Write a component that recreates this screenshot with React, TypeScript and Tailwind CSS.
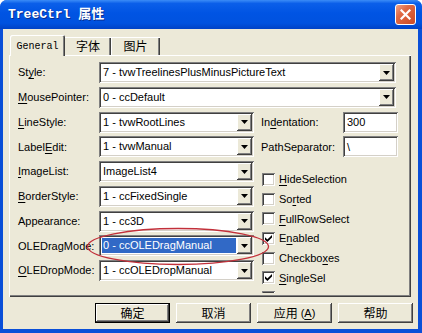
import React from "react";

const raised =
  "shadow-[inset_-1px_-1px_0_#404040,inset_1px_1px_0_#ffffff,inset_-2px_-2px_0_#808080,inset_2px_2px_0_#ece9d8]";
const sunken =
  "shadow-[inset_1px_1px_0_#808080,inset_-1px_-1px_0_#ffffff,inset_2px_2px_0_#404040,inset_-2px_-2px_0_#d4d0c8]";

function Arrow() {
  return (
    <div className={`w-[15px] h-full bg-[#ece9d8] flex items-center justify-center ${raised}`}>
      <svg width="7" height="4" viewBox="0 0 7 4">
        <path d="M0 0H7L3.5 4Z" fill="#000" />
      </svg>
    </div>
  );
}

function Combo({ text, long, selected }: { text: string; long?: boolean; selected?: boolean }) {
  return (
    <div
      className={`h-[21px] ${long ? "w-[297px]" : "w-[155px]"} bg-white flex p-[2px] ${sunken}`}
    >
      <div className="flex-1 flex items-center pl-[1px] pr-[1px] min-w-0">
        <span
          className={`whitespace-nowrap leading-[15px] h-[15px] pl-[1px] ${
            selected ? "bg-[#3169c6] text-white w-full" : "text-black"
          }`}
        >
          {text}
        </span>
      </div>
      <Arrow />
    </div>
  );
}

function Label({ children, w }: { children: React.ReactNode; w: string }) {
  return <div className={`${w} whitespace-nowrap text-black`}>{children}</div>;
}

function U({ children }: { children: React.ReactNode }) {
  return <span className="underline underline-offset-[2px]">{children}</span>;
}

function Row({ label, text, long, selected }: { label: React.ReactNode; text: string; long?: boolean; selected?: boolean }) {
  return (
    <div className="flex items-center h-[21px]">
      <Label w="w-[81px]">{label}</Label>
      <Combo text={text} long={long} selected={selected} />
    </div>
  );
}

function TextBox({ label, value }: { label: React.ReactNode; value: string }) {
  return (
    <div className="flex items-center h-[21px]">
      <Label w="w-[82px]">{label}</Label>
      <div className={`w-[55px] h-[21px] bg-white flex items-center pl-[4px] ${sunken}`}>{value}</div>
    </div>
  );
}

function Check({ label, checked }: { label: React.ReactNode; checked?: boolean }) {
  return (
    <div className="flex items-center h-[13px] shrink-0 ml-[1px]">
      <div className={`w-[13px] h-[13px] bg-white relative shrink-0 ${sunken}`}>
        {checked && (
          <svg className="absolute left-[3px] top-[3px]" width="7" height="7" viewBox="0 0 7 7">
            <path d="M0 2.2L2.4 4.6L7 0V2.6L2.4 7L0 4.8Z" fill="#000" />
          </svg>
        )}
      </div>
      <span className="ml-[4px] whitespace-nowrap">{label}</span>
    </div>
  );
}

function Btn({ children, def }: { children: React.ReactNode; def?: boolean }) {
  return (
    <div
      className={`w-[75px] h-[20px] flex items-center justify-center bg-[#ece9d8] text-[12px] font-['Noto_Sans_CJK_SC',sans-serif] ${
        def
          ? "shadow-[inset_0_0_0_1px_#000000,inset_-2px_-2px_0_#404040,inset_2px_2px_0_#ffffff,inset_-3px_-3px_0_#808080]"
          : raised
      }`}
    >
      {children}
    </div>
  );
}

export default function App() {
  return (
    <div className="relative w-[422px] h-[333px] flex flex-col bg-[#0a4fd8] rounded-t-[7px] overflow-hidden font-['Liberation_Sans',Arial,sans-serif] text-[11px] text-black">
      {/* Title bar */}
      <div className="h-[29px] shrink-0 flex items-center pl-[8px] pr-[6px] bg-[linear-gradient(to_bottom,#3b8cf7_0%,#0b5fe9_12%,#0054e3_45%,#0052df_80%,#0042c6_100%)]">
        <span className="text-white font-bold text-[13px] font-['Liberation_Mono','Noto_Sans_CJK_SC',monospace] [text-shadow:1px_1px_0_#0a2f8f]">
          TreeCtrl 属性
        </span>
        <div className="ml-auto w-[21px] h-[21px] rounded-[3px] border border-white bg-[linear-gradient(135deg,#f0a48a_0%,#e06a45_35%,#cc4a24_100%)] flex items-center justify-center">
          <svg width="11" height="11" viewBox="0 0 11 11">
            <path d="M1.5 1.5L9.5 9.5M9.5 1.5L1.5 9.5" stroke="#fff" strokeWidth="2.2" strokeLinecap="square" />
          </svg>
        </div>
      </div>

      {/* Body */}
      <div className="flex-1 ml-[3px] mr-[4px] mb-[4px] bg-[#ece9d8] flex flex-col pt-[6px]">
        {/* Tabs */}
        <div className="h-[20px] shrink-0 flex items-start pl-[7px] relative z-10">
          <div className="w-[55px] h-[21px] bg-[#ece9d8] flex items-center justify-center rounded-t-[2px] shadow-[inset_1px_1px_0_#ffffff,inset_-1px_0_0_#404040,inset_-2px_0_0_#808080] font-['Liberation_Mono',monospace] text-[10px] pt-[1px]">
            General
          </div>
          <div className="mt-[2px] w-[46px] h-[18px] flex items-center justify-center shadow-[inset_0_1px_0_#ffffff,inset_-1px_0_0_#404040,inset_-2px_0_0_#808080] text-[12px] font-['Noto_Sans_CJK_SC',sans-serif]">
            字体
          </div>
          <div className="mt-[2px] w-[49px] h-[18px] flex items-center justify-center shadow-[inset_1px_1px_0_#ffffff,inset_-1px_0_0_#404040,inset_-2px_0_0_#808080] text-[12px] font-['Noto_Sans_CJK_SC',sans-serif]">
            图片
          </div>
        </div>

        {/* Panel */}
        <div className="ml-[6px] w-[402px] h-[242px] shrink-0 bg-[#ece9d8] shadow-[inset_1px_1px_0_#ffffff,inset_-1px_-1px_0_#404040,inset_-2px_-2px_0_#808080] pt-[7px] pl-[9px] flex flex-col gap-[3.75px]">
          <Row label={<>St<U>y</U>le:</>} text="7 - tvwTreelinesPlusMinusPictureText" long />
          <Row label={<><U>M</U>ousePointer:</>} text="0 - ccDefault" long />
          <div className="flex">
            <div className="flex flex-col gap-[3.75px]">
              <Row label={<><U>L</U>ineStyle:</>} text="1 - tvwRootLines" />
              <Row label={<>Label<U>E</U>dit:</>} text="1 - tvwManual" />
              <Row label={<><U>I</U>mageList:</>} text="ImageList4" />
              <Row label={<><U>B</U>orderStyle:</>} text="1 - ccFixedSingle" />
              <Row label="Appearance:" text="1 - cc3D" />
              <Row label="OLEDragMode:" text="0 - ccOLEDragManual" selected />
              <Row label={<><U>O</U>LEDropMode:</>} text="1 - ccOLEDropManual" />
            </div>
            <div className="ml-[7px] flex flex-col">
              <div className="flex flex-col gap-[3.75px]">
                <TextBox label={<>In<U>d</U>entation:</>} value="300" />
                <TextBox label="PathSeparator:" value="\" />
              </div>
              <div className="mt-[15.75px] h-[120px] overflow-hidden flex flex-col gap-[6.7px]">
                <Check label={<><U>H</U>ideSelection</>} />
                <Check label={<>So<U>r</U>ted</>} />
                <Check label={<><U>F</U>ullRowSelect</>} />
                <Check label={<>E<U>n</U>abled</>} checked />
                <Check label={<>Checkbo<U>x</U>es</>} />
                <Check label={<><U>S</U>ingleSel</>} checked />
                <Check label="Scroll" checked />
              </div>
            </div>
          </div>
        </div>

        {/* Buttons */}
        <div className="mt-[6px] h-[20px] shrink-0 flex justify-end gap-[6px] pr-[5px]">
          <Btn def>确定</Btn>
          <Btn>取消</Btn>
          <Btn>
            应用
            <span className="ml-[3px] text-[11px] font-['Liberation_Sans',sans-serif]">
              (<U>A</U>)
            </span>
          </Btn>
          <Btn>帮助</Btn>
        </div>
      </div>

      {/* Red annotation ellipse */}
      <svg className="absolute left-[86px] top-[227px]" width="184" height="40" viewBox="0 0 184 40">
        <ellipse cx="92" cy="19.5" rx="90.5" ry="18" fill="none" stroke="#c2303a" strokeWidth="1.3" />
      </svg>
    </div>
  );
}
